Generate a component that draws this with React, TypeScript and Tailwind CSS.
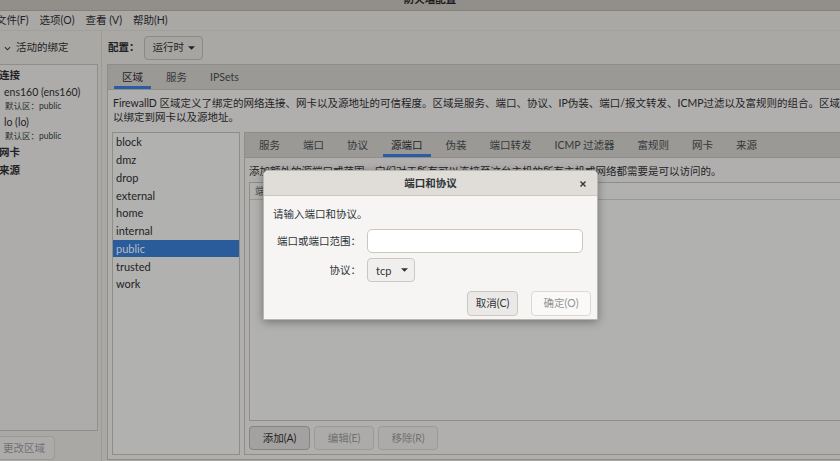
import React from 'react';

const zones = ['block', 'dmz', 'drop', 'external', 'home', 'internal', 'public', 'trusted', 'work'];
const innerTabs = ['服务', '端口', '协议', '源端口', '伪装', '端口转发', 'ICMP 过滤器', '富规则', '网卡', '来源'];

const Caret: React.FC<{ className?: string }> = ({ className = '' }) => (
  <svg viewBox="0 0 8 4" className={className}>
    <path d="M0 0h8L4 4z" fill="currentColor" />
  </svg>
);

const Tab: React.FC<{ label: string; active?: boolean }> = ({ label, active }) => (
  <div
    className={`mx-[3.5px] px-[8px] h-full flex items-center pt-[3px] border-b-[3px] whitespace-nowrap ${
      active ? 'border-[#2a5da3] text-[#1f2325]' : 'border-transparent text-[#33383a]'
    }`}
  >
    {label}
  </div>
);

const Button: React.FC<{ label: string; disabled?: boolean; className?: string }> = ({ label, disabled, className = '' }) => (
  <div
    className={`h-[24px] flex items-center justify-center rounded-[4px] border ${
      disabled ? 'bg-[#acabaa] border-[#9b9a98] text-[#717171]' : 'bg-[#a3a2a0] border-[#868481] text-[#1f2325]'
    } ${className}`}
  >
    {label}
  </div>
);

export default function App() {
  return (
    <div className="relative w-[840px] h-[461px] overflow-hidden flex flex-col bg-[#a9a8a5] text-[#1f2325] text-[10.5px] leading-none font-['Lato','Noto_Sans_CJK_SC',sans-serif]">
      {/* title bar */}
      <div className="h-[11px] shrink-0 bg-[#928f8b] border-b border-[#84817d] flex justify-center overflow-hidden">
        <span className="ml-[20px] -mt-[6px] font-bold text-[#1c1c1c]">防火墙配置</span>
      </div>

      {/* menubar */}
      <div className="h-[20px] shrink-0 flex items-center gap-[11px] -ml-[4px] border-b border-[#a1a09d]">
        <span>文件(F)</span>
        <span>选项(O)</span>
        <span>查看 (V)</span>
        <span>帮助(H)</span>
      </div>

      <div className="flex-1 flex min-h-0">
        {/* left pane */}
        <div className="w-[98px] shrink-0 flex flex-col">
          <div className="h-[33px] shrink-0 flex items-center">
            <svg viewBox="0 0 8 5" className="w-[7px] h-[5px] ml-[4px] mt-[1px] text-[#2a2e30]">
              <path d="M1 1l3 3 3-3" fill="none" stroke="currentColor" strokeWidth="1.2" />
            </svg>
            <span className="ml-[5px]">活动的绑定</span>
          </div>
          <div className="flex-1 bg-[#adacab] border-t border-r border-b border-[#908e8b] pt-[1px] flex flex-col">
            <div className="h-[18px] flex items-center -ml-[1px] font-bold">连接</div>
            <div className="h-[16px] flex items-center pl-[4px] whitespace-nowrap text-[10.5px]">ens160 (ens160)</div>
            <div className="h-[13px] flex items-center pl-[5px] text-[8.5px] text-[#2b2f31]">默认区：public</div>
            <div className="h-[16px] mt-[1px] flex items-center pl-[4px] text-[10.5px]">lo (lo)</div>
            <div className="h-[12px] flex items-center pl-[5px] text-[8.5px] text-[#2b2f31]">默认区：public</div>
            <div className="h-[18px] mt-[1px] flex items-center -ml-[1px] font-bold">网卡</div>
            <div className="h-[18px] flex items-center -ml-[1px] font-bold">来源</div>
          </div>
          <div className="h-[30px] shrink-0 pt-[5px]">
            <Button label="更改区域" disabled className="w-[62px] h-[23px] -ml-[7px] pl-[9px] justify-start" />
          </div>
        </div>

        {/* pane handle */}
        <div className="w-[9px] shrink-0 flex">
          <div className="ml-[3px] w-px bg-[#9c9b98]" />
        </div>

        {/* right pane */}
        <div className="w-[780px] shrink-0 flex flex-col">
          <div className="h-[33px] shrink-0 flex items-center pl-[1px]">
            <span className="font-bold">配置：</span>
            <div className="ml-[4px] w-[59px] h-[24px] rounded-[4px] border border-[#8c8986] bg-[#a6a5a2] flex items-center pl-[8px] gap-[4px]">
              <span>运行时</span>
              <Caret className="w-[7px] h-[4px]" />
            </div>
          </div>

          {/* outer notebook */}
          <div className="flex-1 flex flex-col border-t border-l border-b border-[#8f8d8a] mb-[1px] min-h-0">
            <div className="h-[25px] shrink-0 bg-[#9b9996] border-b border-[#8f8d8a] flex pl-[2.5px]">
              <Tab label="区域" active />
              <Tab label="服务" />
              <Tab label="IPSets" />
            </div>
            <div className="flex-1 bg-[#b0afad] flex flex-col pt-[6px] pb-[4px] min-h-0">
              <div className="pl-[5px] leading-[14px] whitespace-nowrap">
                <div>FirewallD 区域定义了绑定的网络连接、网卡以及源地址的可信程度。区域是服务、端口、协议、IP伪装、端口/报文转发、ICMP过滤以及富规则的组合。区域可</div>
                <div>以绑定到网卡以及源地址。</div>
              </div>
              <div className="mt-[8px] flex-1 flex gap-[4px] pl-[4px] min-h-0">
                {/* zone list */}
                <div className="w-[128px] shrink-0 border border-[#8f8d8a] bg-[#b1b1b0] text-[11px]">
                  {zones.map((z) => (
                    <div
                      key={z}
                      className={`h-[17.75px] flex items-center pl-[3px] ${
                        z === 'public' ? 'bg-[#2a5b9b] text-[#b7bcc4]' : ''
                      }`}
                    >
                      {z}
                    </div>
                  ))}
                </div>

                {/* inner notebook */}
                <div className="flex-1 flex flex-col border border-[#8f8d8a]">
                  <div className="h-[25px] shrink-0 bg-[#9b9996] border-b border-[#8f8d8a] flex pl-[2.5px]">
                    {innerTabs.map((t) => (
                      <Tab key={t} label={t} active={t === '源端口'} />
                    ))}
                  </div>
                  <div className="flex-1 flex flex-col pt-[6px] pb-[4px] pl-[4px] min-h-0">
                    <div className="leading-[14px] whitespace-nowrap">
                      添加额外的源端口或范围。它们对于所有可以连接至这台主机的所有主机或网络都需要是可以访问的。
                    </div>
                    <div className="mt-[4px] flex-1 border border-[#8f8d8a] bg-[#b1b1b0] flex flex-col">
                      <div className="h-[17px] border-b border-[#9a9896] flex items-center pl-[5px] text-[#4a4e50]">端口</div>
                    </div>
                    <div className="mt-[5px] flex gap-[4px]">
                      <Button label="添加(A)" className="w-[61px]" />
                      <Button label="编辑(E)" disabled className="w-[60px]" />
                      <Button label="移除(R)" disabled className="w-[60px]" />
                    </div>
                  </div>
                </div>
              </div>
            </div>
          </div>
        </div>
      </div>

      {/* dialog */}
      <div className="absolute left-[263px] top-[170px] w-[335px] h-[150px] flex flex-col bg-[#f6f5f4] border border-[#b9b5b0] rounded-t-[5px] shadow-[0_2px_10px_rgba(0,0,0,0.35)] text-[#2e3436]">
        <div className="h-[25px] shrink-0 bg-[#e0ddd9] border-b border-[#cdc7c2] rounded-t-[5px] flex items-center justify-center relative">
          <span className="font-bold">端口和协议</span>
          <svg viewBox="0 0 6 6" className="absolute right-[11px] top-[10px] w-[6px] h-[6px] text-[#2e3436]">
            <path d="M0.5 0.5l5 5M5.5 0.5l-5 5" stroke="currentColor" strokeWidth="1.4" />
          </svg>
        </div>
        <div className="flex-1 flex flex-col pl-[9px]">
          <div className="mt-[11px] leading-[14px]">请输入端口和协议。</div>
          <div className="mt-[8px] flex items-center">
            <div className="w-[89px] text-right pr-[1px]">端口或端口范围：</div>
            <div className="ml-[5px] w-[216px] h-[24px] bg-white border border-[#cdc7c2] rounded-[5px]" />
          </div>
          <div className="mt-[5px] flex items-center">
            <div className="w-[89px] text-right pr-[1px]">协议：</div>
            <div className="ml-[5px] w-[48px] h-[24px] bg-[#f0efed] border border-[#cdc7c2] rounded-[4px] flex items-center pl-[8px] gap-[10px]">
              <span className="text-[11px]">tcp</span>
              <Caret className="w-[7px] h-[4px]" />
            </div>
          </div>
          <div className="mt-[9px] flex justify-end gap-[13px] pr-[6px]">
            <div className="w-[51px] h-[25px] flex items-center justify-center bg-[#ebe9e7] border border-[#cdc7c2] rounded-[4px]">取消(C)</div>
            <div className="w-[60px] h-[25px] flex items-center justify-center bg-[#faf9f8] border border-[#dcd8d4] rounded-[4px] text-[#929595]">确定(O)</div>
          </div>
        </div>
      </div>
    </div>
  );
}
